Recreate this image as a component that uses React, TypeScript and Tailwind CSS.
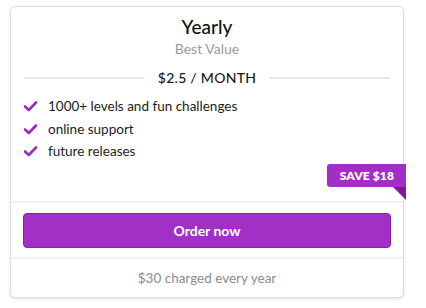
import React from "react";

function Check() {
  return (
    <svg width="13" height="11" viewBox="0 0 13 11" className="shrink-0">
      <path d="M1 5.5 L4.8 9 L12 1.5" fill="none" stroke="#9c2bbf" strokeWidth="2.6" strokeLinecap="round" strokeLinejoin="round" />
    </svg>
  );
}

export default function App() {
  const features = ["1000+ levels and fun challenges", "online support", "future releases"];
  return (
    <div className="w-[426px] h-[308px] bg-white pt-[6px] pl-[10px]" style={{ fontFamily: "Lato, 'Open Sans', sans-serif" }}>
      <div className="relative w-[394px] h-[292px] rounded-[5px] border border-[#dedede] bg-white shadow-[0_1px_3px_rgba(0,0,0,0.12)] flex flex-col">
        <div className="flex flex-col items-center pt-[7px]">
          <div className="text-[19px] leading-[26px] text-[#111] font-medium">Yearly</div>
          <div className="text-[14px] leading-[18px] text-[#9a9aa6]">Best Value</div>
        </div>
        <div className="flex items-center px-[13px] mt-[11px] h-[18px]">
          <div className="flex-1 h-[2px] bg-[#e6e6e6]" />
          <div className="px-[14px] text-[14px] leading-[18px] text-[#1a1a1a] tracking-[0.02em] font-medium">$2.5 / MONTH</div>
          <div className="flex-1 h-[2px] bg-[#e6e6e6]" />
        </div>
        <div className="flex flex-col gap-[5px] px-[13px] mt-[11px] h-[103px]">
          {features.map((f) => (
            <div key={f} className="flex items-center gap-[11px] text-[13.5px] leading-[17.5px] text-[#1c1c1c]">
              <Check />
              <span>{f}</span>
            </div>
          ))}
        </div>
        <div className="absolute right-[-3px] top-[157px] flex flex-col items-end">
          <div className="bg-[#a12fc5] text-white text-[12px] font-extrabold leading-[23px] h-[23px] pl-[13px] pr-[12px] rounded-l-[3px] tracking-[0.01em]">SAVE $18</div>
          <div className="w-0 h-0 border-t-[13px] border-t-[#7a1c96] border-l-[13px] border-l-transparent" />
        </div>
        <div className="h-[2px] bg-[#f1f1f1]" />
        <div className="px-[12px] pt-[10px] pb-[9px]">
          <button className="w-full h-[35px] rounded-[4px] bg-[#a22fc6] border border-[#8c1fb0] text-white text-[14px] font-bold">Order now</button>
        </div>
        <div className="h-[2px] bg-[#f3f3f3]" />
        <div className="flex-1 flex items-center justify-center text-[13.5px] text-[#8c8c8c]">$30 charged every year</div>
      </div>
    </div>
  );
}
